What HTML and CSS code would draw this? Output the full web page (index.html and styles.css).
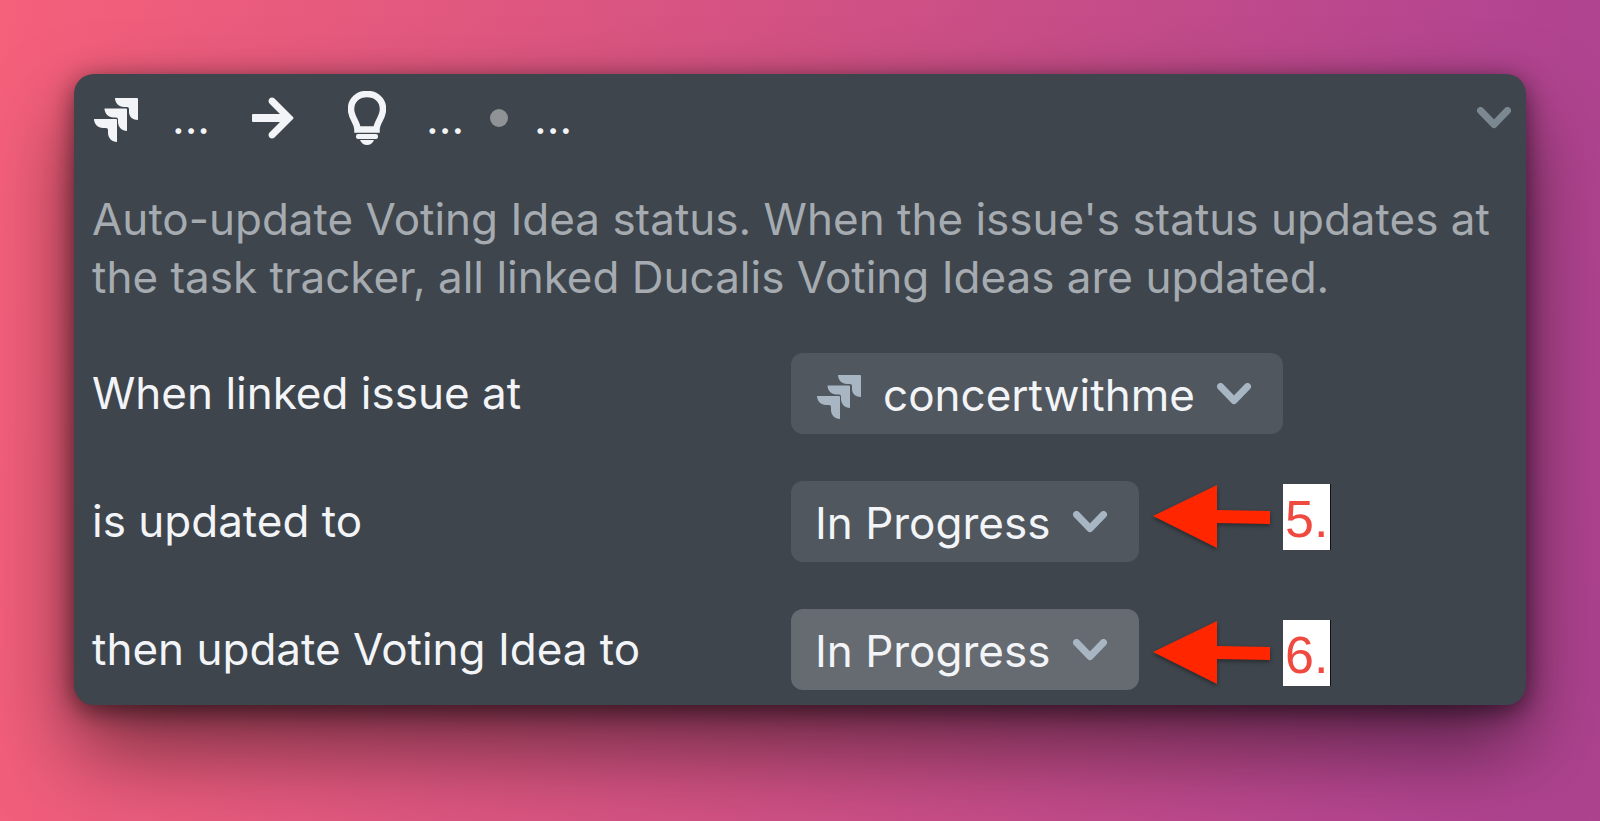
FILE: index.html
```html
<!DOCTYPE html>
<html lang="en">
<head>
  <meta charset="UTF-8">
  <meta name="viewport" content="width=device-width, initial-scale=1">
  <title>Status sync</title>
  <link rel="stylesheet" href="styles.css">
</head>

<body>

<!-- shared icons -->
<svg class="sprite" aria-hidden="true">
  <symbol id="icon-jira" viewBox="0 0 44 44">
    <path d="M21 0H43Q44 0 44 1V22C39 22 35 19 35 14V11Q35 9 33 9H30C25 9 21 5 21 0Z"/>
    <path d="M10.500 10.500H32Q33 10.500 33 11.500V33C28 33 24 29 24 24V21.500Q24 19.500 22 19.500H19.500C14.500 19.500 10.500 15.500 10.500 10.500Z"/>
    <path d="M0 21H22Q23 21 23 22V44C18 44 14 40 14 35V32Q14 30 12 30H9C4 30 0 26 0 21Z"/>
  </symbol>
  <symbol id="icon-chevron" viewBox="0 0 34 22">
    <path d="M3.500 3.500L17 17.500L30.500 3.500" fill="none" stroke="currentColor" stroke-width="7" stroke-linecap="round" stroke-linejoin="round"/>
  </symbol>
  <symbol id="icon-pointer" viewBox="0 0 118 64">
    <path d="M0 31L64 0V25L117 26V39L64 38V63Z"/>
  </symbol>
</svg>

<div class="card">
  <div class="header">
    <svg class="icon-jira"><use href="#icon-jira"/></svg>
    <span class="dots">...</span>
    <svg class="icon-arrow" viewBox="0 0 42 42">
      <path d="M1 17H28L17.500 6.500C14.500 3 19 -1.500 22.500 1.500L41 20Q42 21 41 22L22.500 40.500C19 43.500 14.500 39 17.500 35.500L28 25H1Q0 25 0 24V18Q0 17 1 17Z"/>
    </svg>
    <svg class="icon-bulb" viewBox="0 0 38 54">
      <path d="M9.500 38.500C9.500 31 3 27 3 18C3 9 10 3 19 3S35 9 35 18C35 27 28.500 31 28.500 38.500Z" fill="none" stroke="currentColor" stroke-width="6.500"/>
      <rect x="8" y="43" width="22" height="5" rx="2"/>
      <path d="M12 49H26C25 52 22 54 19 54S13 52 12 49Z"/>
    </svg>
    <span class="dots">...</span>
    <span class="bullet"></span>
    <span class="dots">...</span>
    <button class="toggle-btn" type="button" aria-label="Collapse">
      <svg class="icon-chevron"><use href="#icon-chevron"/></svg>
    </button>
  </div>

  <p class="description">Auto-update Voting Idea status. When the issue's status updates at the task tracker, all linked Ducalis Voting Ideas are updated.</p>

  <div class="rows">
    <div class="row">
      <label for="tracker">When linked issue at</label>
      <div class="picker with-logo">
        <svg class="icon-jira"><use href="#icon-jira"/></svg>
        <select id="tracker"><option>concertwithme</option></select>
        <svg class="icon-chevron"><use href="#icon-chevron"/></svg>
      </div>
    </div>
    <div class="row">
      <label for="issue-status">is updated to</label>
      <div class="picker">
        <select id="issue-status"><option>In Progress</option></select>
        <svg class="icon-chevron"><use href="#icon-chevron"/></svg>
        <div class="note note-top">
          <svg class="icon-pointer"><use href="#icon-pointer"/></svg>
          <span class="note-number">5.</span>
        </div>
      </div>
    </div>
    <div class="row">
      <label for="idea-status">then update Voting Idea to</label>
      <div class="picker active">
        <select id="idea-status"><option>In Progress</option></select>
        <svg class="icon-chevron"><use href="#icon-chevron"/></svg>
        <div class="note note-bottom">
          <svg class="icon-pointer"><use href="#icon-pointer"/></svg>
          <span class="note-number">6.</span>
        </div>
      </div>
    </div>
  </div>
</div>

</body>
</html>
```
FILE: styles.css
```css
* {
  box-sizing: border-box;
}
body {
  margin: 0;
  min-height: 100vh;
  padding: 74px;
  font-family: 'Inter', sans-serif;
  font-size: 44px;
  color: #f2f4f7;
  background: linear-gradient(97deg, #f5607a 0%, #d05184 50%, #b44590 88%, #ac428e 100%);
}
svg {
  display: block;
  flex: none;
  fill: currentColor;
}
.sprite {
  position: absolute;
  width: 0;
  height: 0;
}
.card {
  padding: 16px 15px 15px 18px;
  background: #3e454c;
  border-radius: 20px;
  box-shadow: 0 44px 84px rgba(0,0,0,0.5), 0 6px 26px rgba(0,0,0,0.55);
}
.header {
  display: flex;
  align-items: center;
  height: 56px;
}
.icon-jira {
  width: 44px;
  height: 44px;
}
.header .icon-jira {
  margin: 4px 34px 0 2px;
}
.dots {
  line-height: 56px;
}
.icon-arrow {
  width: 42px;
  height: 42px;
  margin: 0 54px 0 42px;
}
.icon-bulb {
  width: 38px;
  height: 54px;
  margin-right: 40px;
}
.bullet {
  width: 18px;
  height: 18px;
  margin: 0 26px;
  border-radius: 50%;
  background: #8f9396;
}
.toggle-btn {
  margin-left: auto;
  padding: 0;
  border: none;
  background: none;
  color: #7b8892;
  cursor: pointer;
}
.icon-chevron {
  width: 34px;
  height: 22px;
}
.description {
  margin: 44px 0 47px;
  line-height: 58px;
  color: #a5abb0;
}
.rows {
  display: grid;
  gap: 47px;
}
.row {
  display: grid;
  grid-template-columns: 699px 1fr;
  align-items: center;
}
.row label {
  padding-bottom: 2px;
}
.picker {
  position: relative;
  justify-self: start;
  color: #a8b6c3;
}
.picker select {
  display: block;
  height: 81px;
  padding: 2px 88px 0 24px;
  border: none;
  border-radius: 12px;
  appearance: none;
  background: #50575e;
  color: #f2f4f7;
  font: inherit;
  cursor: pointer;
}
.picker.active select {
  background: #656b71;
}
.picker.with-logo select {
  padding-left: 92px;
}
/* icons sit on top of the select */
.picker .icon-jira,
.picker .icon-chevron {
  position: absolute;
  top: 22px;
  left: 26px;
  pointer-events: none;
}
.picker .icon-chevron {
  top: 30px;
  left: auto;
  right: 32px;
}
.note {
  position: absolute;
  left: 100%;
  display: flex;
  align-items: center;
  gap: 12px;
  padding-left: 14px;
}
.note-top {
  top: 3px;
}
.note-bottom {
  bottom: 4px;
}
.icon-pointer {
  width: 118px;
  height: 64px;
  color: #ff2600;
  filter: drop-shadow(0 2px 2px rgba(0,0,0,0.4));
}
.note-number {
  padding: 4px 2px 0;
  background: #fff;
  color: #f04a40;
  font-family: 'Liberation Sans', Arial, sans-serif;
  font-size: 52px;
  line-height: 62px;
  box-shadow: 1px 0 0 #111;
}
```
